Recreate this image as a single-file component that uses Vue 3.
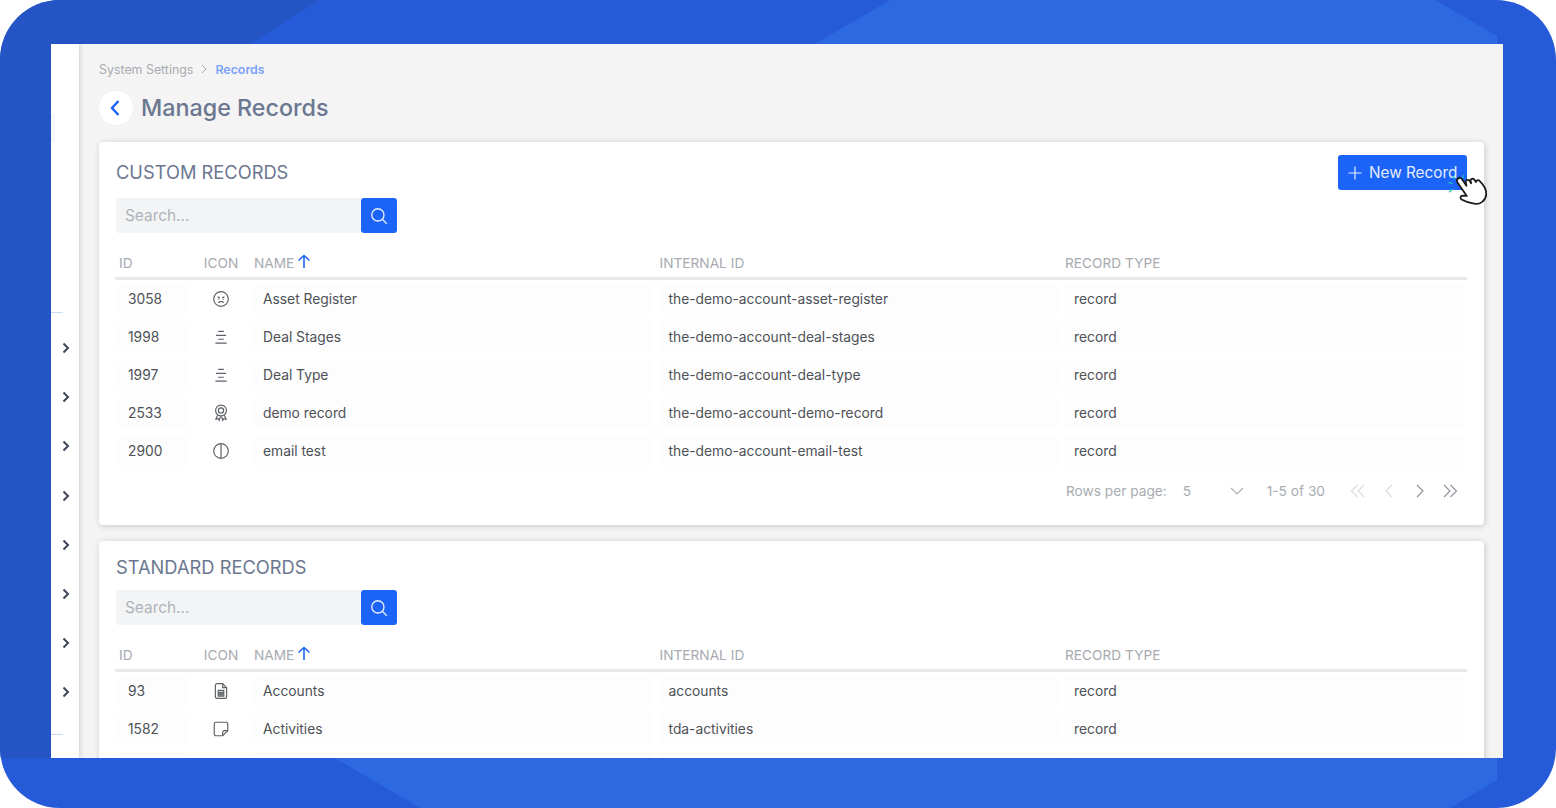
<template>
  <div class="frame">
    <svg class="backdrop" width="1556" height="808" viewBox="0 0 1556 808">
      <path d="M0 0H320L250 44H51V758H0Z" fill="#2554c4" />
      <path d="M890 0L815 44H1497V36L1435 0Z" fill="#2d69e1" />
      <path d="M335 758L420 808H1450L1497 780V758Z" fill="#2d69e1" />
    </svg>

    <div class="window">
      <aside class="sidebar">
        <div class="side-tab"></div>
        <div class="side-line first"></div>
        <div class="side-items">
          <svg v-for="n in 8" :key="n" class="side-chevron" width="10" height="14" viewBox="0 0 10 14">
            <path d="M2.500 2.500L7 7L2.500 11.500" />
          </svg>
        </div>
        <div class="side-line last"></div>
      </aside>

      <main class="content">
        <div class="crumbs">
          <span>System Settings</span>
          <svg width="8" height="10" viewBox="0 0 8 10"><path d="M2 1L6 5L2 9" /></svg>
          <span class="crumb-active">Records</span>
        </div>

        <div class="page-head">
          <button class="back">
            <svg width="12" height="18" viewBox="0 0 12 18"><path d="M9.500 2L3 9L9.500 16" /></svg>
          </button>
          <h1>Manage Records</h1>
        </div>

        <section v-for="table in tables" :key="table.title" class="card" :class="table.kind">
          <div class="card-head">
            <h2>{{ table.title }}</h2>
            <button v-if="table.action" class="new-btn">
              <svg width="14" height="14" viewBox="0 0 14 14"><path d="M7 0.500V13.500M0.500 7H13.500" /></svg>
              New Record
              <svg class="hand" width="48" height="41" viewBox="0 0 40 34">
                <path class="spark" d="M4.500 13L8 13.500M5 21L8 18.500M8 7.500L10 10M17.500 6.500L16 9.500" />
                <path class="hand-shape" d="M12.500 9.500C13.500 8.500 15 8.800 15.800 10L19.500 15.500L19 12.500C18.800 11 20.500 10 21.800 11L23.500 13.500L23 11.500C22.800 10 24.700 9 26 10.300L27.500 12.500C27.500 11 29.500 10.400 30.500 11.500C34 15 36.500 19 36 23C35.500 28 31 31.500 26 30.500C22.500 30 19 29 15.500 27C14 26 14.500 24 16 23.800L19.800 24L11.800 12.500C11.400 11.500 11.800 10.200 12.500 9.500Z" />
              </svg>
            </button>
          </div>

          <div class="search">
            <input type="text" placeholder="Search..." />
            <button class="search-btn">
              <svg width="20" height="20" viewBox="0 0 18 18">
                <circle cx="8" cy="8" r="5.500" />
                <path d="M12 12L16 16" />
              </svg>
            </button>
          </div>

          <div class="grid">
            <div class="row header">
              <div class="id-head">ID</div>
              <div class="center">ICON</div>
              <div class="sortable">
                NAME
                <svg width="14" height="15" viewBox="0 0 14 15"><path d="M7 14V1.500M1.500 6.500L7 1.500L12.500 6.500" /></svg>
              </div>
              <div>INTERNAL ID</div>
              <div>RECORD TYPE</div>
            </div>
            <div v-for="row in table.rows" :key="row.id" class="row">
              <div class="cell">{{ row.id }}</div>
              <div class="cell-icon">
                <svg v-if="row.icon" width="18" height="18" viewBox="0 0 16 16">
                  <path v-for="d in icons[row.icon]" :key="d" :d="d" />
                </svg>
              </div>
              <div class="cell">{{ row.name }}</div>
              <div class="cell">{{ row.internal }}</div>
              <div class="cell">{{ row.type }}</div>
            </div>
          </div>

          <div v-if="table.pager" class="pager">
            <span>Rows per page:</span>
            <span class="per-page">5</span>
            <svg class="pager-caret" width="14" height="8" viewBox="0 0 14 8"><path d="M1 1L7 7L13 1" /></svg>
            <span class="range">1-5 of 30</span>
            <svg class="pg off" width="16" height="14" viewBox="0 0 16 14"><path d="M7.500 1L1.500 7L7.500 13M14 1L8 7L14 13" /></svg>
            <svg class="pg off" width="16" height="14" viewBox="0 0 16 14"><path d="M11 1L5 7L11 13" /></svg>
            <svg class="pg" width="16" height="14" viewBox="0 0 16 14"><path d="M5 1L11 7L5 13" /></svg>
            <svg class="pg last" width="16" height="14" viewBox="0 0 16 14"><path d="M2 1L8 7L2 13M8.500 1L14.500 7L8.500 13" /></svg>
          </div>
        </section>
      </main>
    </div>
  </div>
</template>

<script setup>
const circle = 'M8 1.500A6.500 6.500 0 1 1 8 14.500A6.500 6.500 0 1 1 8 1.500Z';

const icons = {
  angry: [circle, 'M5 6L7 7M11 6L9 7M5.500 8.200H6.500M9.500 8.200H10.500', 'M5.500 11.200C6.500 10 9.500 10 10.500 11.200'],
  align: ['M5.500 3H10.500M3.500 6.500H12.500M5.500 10H10.500M3 13.500H13'],
  award: ['M8 1A4.800 4.800 0 1 1 8 10.600A4.800 4.800 0 1 1 8 1Z', 'M8 3.500A2.300 2.300 0 1 1 8 8.100A2.300 2.300 0 1 1 8 3.500Z', 'M5 10L3.500 13.500L5.500 13L6.500 14.500L7.500 11M11 10L12.500 13.500L10.500 13L9.500 14.500L8.500 11'],
  half: [circle, 'M8 1.500V14.500'],
  file: ['M3 3A1.500 1.500 0 0 1 4.500 1.500H9.500L13 5V13A1.500 1.500 0 0 1 11.500 14.500H4.500A1.500 1.500 0 0 1 3 13Z', 'M9.500 1.500V5H13M5.500 7.500H10.500V12.500H5.500ZM5.500 9.200H10.500M5.500 10.800H10.500M7.200 9.200V12.500M8.800 9.200V12.500'],
  note: ['M3.500 2H12.500A1.500 1.500 0 0 1 14 3.500V9.500L9.500 14H3.500A1.500 1.500 0 0 1 2 12.500V3.500A1.500 1.500 0 0 1 3.500 2Z', 'M14 9.500H11A1.500 1.500 0 0 0 9.500 11V14'],
};

const tables = [
  {
    title: 'CUSTOM RECORDS',
    kind: 'custom',
    action: true,
    pager: true,
    rows: [
      { id: 3058, icon: 'angry', name: 'Asset Register', internal: 'the-demo-account-asset-register', type: 'record' },
      { id: 1998, icon: 'align', name: 'Deal Stages', internal: 'the-demo-account-deal-stages', type: 'record' },
      { id: 1997, icon: 'align', name: 'Deal Type', internal: 'the-demo-account-deal-type', type: 'record' },
      { id: 2533, icon: 'award', name: 'demo record', internal: 'the-demo-account-demo-record', type: 'record' },
      { id: 2900, icon: 'half', name: 'email test', internal: 'the-demo-account-email-test', type: 'record' },
    ],
  },
  {
    title: 'STANDARD RECORDS',
    kind: 'standard',
    action: false,
    pager: false,
    rows: [
      { id: 93, icon: 'file', name: 'Accounts', internal: 'accounts', type: 'record' },
      { id: 1582, icon: 'note', name: 'Activities', internal: 'tda-activities', type: 'record' },
      { id: '', icon: '', name: '', internal: '', type: '' },
    ],
  },
];
</script>

<style>
html,
body {
  background: #fff;
}
</style>

<style scoped>
.frame {
  position: relative;
  width: 1556px;
  height: 808px;
  box-sizing: border-box;
  padding: 44px 53px 50px 51px;
  border-radius: 60px;
  overflow: hidden;
  background: #255bd9;
  font-family: Inter, "Liberation Sans", sans-serif;
}
.backdrop {
  position: absolute;
  top: 0;
  left: 0;
}
.window {
  position: relative;
  display: flex;
  height: 714px;
  overflow: hidden;
  background: #f4f4f4;
}
.sidebar {
  position: relative;
  flex: 0 0 28px;
  background: #fff;
  box-shadow: 1px 0 5px rgba(0, 0, 0, 0.16);
}
.side-tab {
  position: absolute;
  top: 70px;
  left: 0;
  width: 4px;
  height: 28px;
  background: #f8f8f8;
}
.side-line {
  position: absolute;
  left: 0;
  width: 12px;
  height: 1px;
  background: #c9d9f7;
}
.side-line.first {
  top: 268px;
}
.side-line.last {
  top: 690px;
}
.side-items {
  display: flex;
  flex-direction: column;
  align-items: center;
  gap: 35.200px;
  padding-top: 297px;
  padding-left: 2px;
}
.side-chevron {
  display: block;
  fill: none;
  stroke: #3f4657;
  stroke-width: 2;
}
.content {
  flex: 1;
  min-width: 0;
  padding: 0 19px 0 20px;
}
.crumbs {
  display: flex;
  align-items: center;
  gap: 7px;
  height: 14px;
  margin-top: 18px;
  font-size: 12.400px;
  color: #a8abb2;
}
.crumbs svg {
  fill: none;
  stroke: #a8abb2;
  stroke-width: 1;
}
.crumb-active {
  font-weight: 600;
  color: #7ba2fb;
}
.page-head {
  display: flex;
  align-items: center;
  gap: 8px;
  height: 34px;
  margin-top: 15px;
}
.back {
  display: flex;
  align-items: center;
  justify-content: center;
  width: 34px;
  height: 34px;
  padding: 0 2px 0 0;
  border: 0;
  border-radius: 50%;
  background: #fff;
}
.back svg {
  fill: none;
  stroke: #1c64f8;
  stroke-width: 2.400;
}
h1 {
  margin: 0 0 2px;
  font-size: 23.300px;
  font-weight: 500;
  color: #6b7790;
}
.card {
  box-sizing: border-box;
  margin-top: 16px;
  padding: 13px 17px 0 16px;
  border-radius: 4px;
  background: #fff;
  box-shadow: 1px 1px 6px rgba(0, 0, 0, 0.18);
}
.card.custom {
  margin-top: 17px;
  height: 383px;
}
.card.standard {
  padding-top: 16px;
  height: 260px;
}
.card-head {
  display: flex;
  align-items: center;
  justify-content: space-between;
  height: 35px;
}
.standard .card-head {
  height: 20px;
}
h2 {
  margin: 0 0 0 1px;
  font-size: 18.300px;
  font-weight: 400;
  color: #6b7790;
}
.custom h2 {
  margin-bottom: 2px;
}
.new-btn {
  position: relative;
  display: flex;
  align-items: center;
  gap: 7px;
  box-sizing: border-box;
  width: 129px;
  height: 35px;
  padding: 0 0 0 10px;
  border: 0;
  border-radius: 3px;
  background: #1c64f8;
  font: 15.300px Inter, "Liberation Sans", sans-serif;
  color: #e4ecfe;
}
.new-btn > svg:first-child {
  fill: none;
  stroke: #e4ecfe;
  stroke-width: 1.200;
}
.hand {
  position: absolute;
  left: 105px;
  top: 12px;
}
.spark {
  fill: none;
  stroke: #27c4b8;
  stroke-width: 1;
}
.hand-shape {
  fill: #fff;
  stroke: #1c1c1c;
  stroke-width: 1.500;
  stroke-linejoin: round;
}
.search {
  display: flex;
  width: 281px;
  height: 35px;
  margin: 8px 0 0 1px;
}
.standard .search {
  margin-top: 13px;
}
.search input {
  flex: 1;
  min-width: 0;
  box-sizing: border-box;
  padding: 0 9px;
  border: 0;
  border-radius: 3px 0 0 3px;
  outline: 0;
  background: #f3f4f6;
  font: 15.400px Inter, "Liberation Sans", sans-serif;
}
.search input::placeholder {
  color: #b0b3b9;
}
.search-btn {
  display: flex;
  align-items: center;
  justify-content: center;
  width: 36px;
  padding: 0;
  border: 0;
  border-radius: 3px;
  background: #1c64f8;
}
.search-btn svg {
  fill: none;
  stroke: #e4ecfe;
  stroke-width: 1.200;
}
.grid {
  margin-top: 14px;
}
.row {
  display: grid;
  grid-template-columns: 70px 66px 405.500px 405.500px 1fr;
  align-items: center;
  height: 38px;
  padding: 0 4px 0 3px;
  font-size: 13.800px;
  color: #4d5157;
}
.row.header {
  box-sizing: border-box;
  height: 33px;
  padding: 2px 0 0 3px;
  border-bottom: 3px solid #e9e9e9;
  font-size: 13.700px;
  color: #a7aab0;
}
.id-head {
  padding-left: 1px;
}
.center {
  text-align: center;
}
.sortable {
  display: flex;
  align-items: center;
  gap: 3px;
}
.sortable svg {
  margin-top: -3px;
  fill: none;
  stroke: #1c64f8;
  stroke-width: 1.600;
}
.cell {
  display: flex;
  align-items: center;
  box-sizing: border-box;
  height: 30px;
  margin-right: 7px;
  padding-left: 9px;
  border-radius: 3px;
  background: #fdfdfd;
}
.row .cell:first-child {
  margin-right: 1px;
  padding-left: 10px;
}
.row .cell:last-child {
  margin-right: 0;
}
.cell-icon {
  display: flex;
  align-items: center;
  justify-content: center;
}
.cell-icon svg {
  fill: none;
  stroke: #5e6167;
  stroke-width: 1.050;
}
.pager {
  display: flex;
  align-items: center;
  justify-content: flex-end;
  height: 24px;
  margin-top: 9px;
  padding-right: 9px;
  font-size: 13.700px;
  color: #a9acb2;
}
.per-page {
  width: 47px;
  margin-left: 16px;
}
.pager-caret {
  fill: none;
  stroke: #a9acb2;
  stroke-width: 1.100;
}
.range {
  margin: 0 17px 0 23px;
}
.pg {
  margin-left: 15px;
  fill: none;
  stroke: #8d9096;
  stroke-width: 1.100;
}
.pg.off {
  stroke: #d9dadd;
}
.range + .pg {
  margin-left: 8px;
}
.pg.last {
  margin-left: 14px;
}
</style>
